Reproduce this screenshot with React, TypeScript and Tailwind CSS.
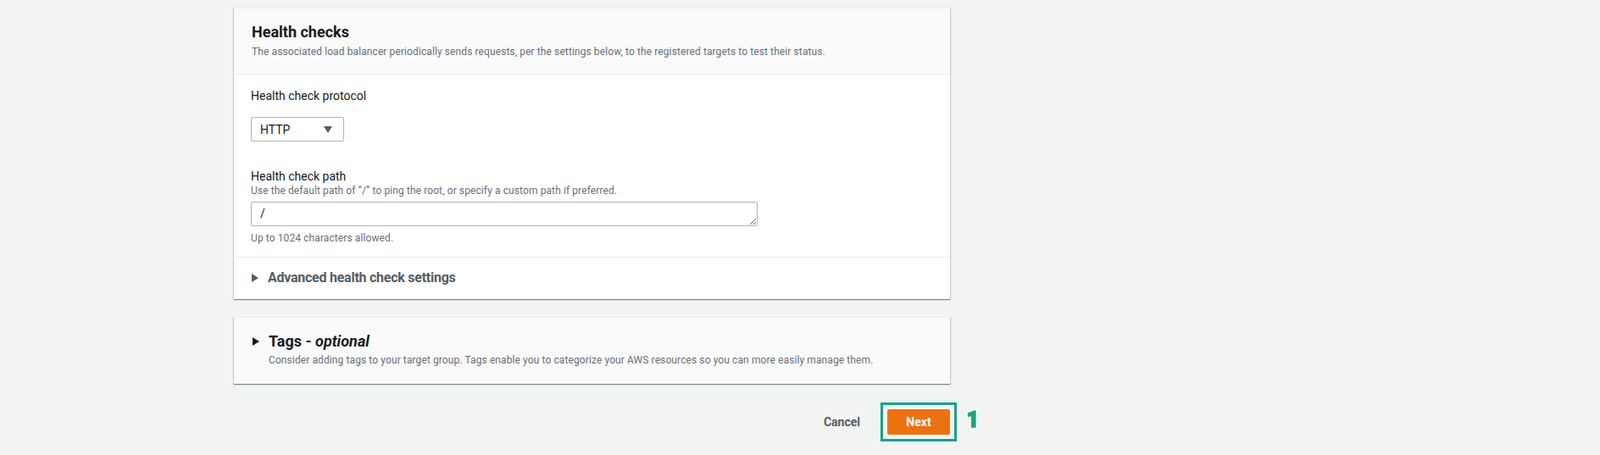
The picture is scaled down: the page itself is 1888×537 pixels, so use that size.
import React from "react";

const cardShadow =
  "shadow-[0_1px_1px_0_rgba(0,28,36,0.3),1px_1px_1px_0_rgba(0,28,36,0.15),-1px_1px_1px_0_rgba(0,28,36,0.15)]";

function Caret({ color, w, h }: { color: string; w: number; h: number }) {
  return (
    <svg width={w} height={h} viewBox={`0 0 ${w} ${h}`} className="shrink-0">
      <polygon points={`0,0 ${w},${h / 2} 0,${h}`} fill={color} />
    </svg>
  );
}

export default function App() {
  return (
    <div className="min-h-screen bg-[#f2f3f3] font-['Roboto',sans-serif] text-[#16191f]">
      <div className="ml-[276px] w-[845px] pt-[9px]">
        {/* Health checks card */}
        <div className={`bg-white border-t border-[#eaeded] ${cardShadow}`}>
          <div className="bg-[#fafafa] border-b border-[#eaeded] pl-[21px] pt-[17px] pb-[18px]">
            <h2 className="text-[18px] leading-[22px] font-bold text-[#16191f]">Health checks</h2>
            <p className="mt-[4px] text-[12px] leading-[16px] tracking-[0.1px] text-[#687078]">
              The associated load balancer periodically sends requests, per the settings below, to the registered targets to test their status.
            </p>
          </div>
          <div className="pl-[20px] pt-[15px] pb-[14px] border-b border-[#eaeded]">
            <div className="text-[14px] leading-[20px] text-[#16191f]">Health check protocol</div>
            <div className="mt-[15px] flex h-[29px] w-[110px] items-center justify-between rounded-[2px] border border-[#aab7b8] bg-white pl-[10px] pr-[13px]">
              <span className="text-[14px] leading-[20px] text-[#16191f]">HTTP</span>
              <svg width="10" height="8" viewBox="0 0 10 8">
                <polygon points="0,0 10,0 5,8" fill="#545b64" />
              </svg>
            </div>
            <div className="mt-[32px] text-[14px] leading-[18px] text-[#16191f]">Health check path</div>
            <div className="text-[12px] leading-[16px] tracking-[0.1px] text-[#687078]">
              Use the default path of “/” to ping the root, or specify a custom path if preferred.
            </div>
            <textarea
              defaultValue="/"
              rows={1}
              className="mt-[5px] block h-[29px] w-[598px] rounded-[2px] border border-[#aab7b8] bg-white px-[10px] py-[4px] text-[14px] leading-[19px] text-[#16191f] outline-none"
            />
            <div className="mt-[6px] text-[12px] leading-[16px] tracking-[0.1px] text-[#687078]">Up to 1024 characters allowed.</div>
          </div>
          <div className="flex items-center gap-[11px] pl-[21px] pt-[14px] pb-[15px]">
            <Caret color="#545b64" w={8} h={10} />
            <span className="text-[16px] leading-[20px] font-bold tracking-[-0.25px] text-[#545b64]">Advanced health check settings</span>
          </div>
        </div>

        {/* Tags card */}
        <div className={`mt-[21px] bg-[#fafafa] border-t border-[#eaeded] pl-[22px] pt-[17px] pb-[20px] ${cardShadow}`}>
          <div className="flex items-center gap-[11px]">
            <Caret color="#16191f" w={8} h={10} />
            <h2 className="text-[18px] leading-[22px] font-bold text-[#16191f]">
              Tags - <em className="italic">optional</em>
            </h2>
          </div>
          <p className="mt-[3px] ml-[19px] text-[12px] leading-[16px] tracking-[0.1px] text-[#687078]">
            Consider adding tags to your target group. Tags enable you to categorize your AWS resources so you can more easily manage them.
          </p>
        </div>

        {/* Actions */}
        <div className="mt-[30px] flex items-center justify-end gap-[32px]">
          <button className="text-[14px] leading-[20px] font-bold text-[#545b64]">Cancel</button>
          <div className="relative">
            <button className="flex h-[30px] w-[74px] items-center justify-center rounded-[2px] bg-[#ec7211] text-[14px] font-bold text-white">
              Next
            </button>
            <span className="pointer-events-none absolute -inset-[8px] border-[3px] border-[#14a387]" />
            <span className="absolute -right-[34px] top-[1px] text-[25px] leading-[24px] font-black text-[#14a387] [-webkit-text-stroke:1.5px_#14a387] [text-shadow:-2px_0_#fff,2px_0_#fff,0_-2px_#fff,0_2px_#fff,-2px_-2px_#fff,2px_2px_#fff,-2px_2px_#fff,2px_-2px_#fff]">
              1
            </span>
          </div>
        </div>
      </div>
    </div>
  );
}
